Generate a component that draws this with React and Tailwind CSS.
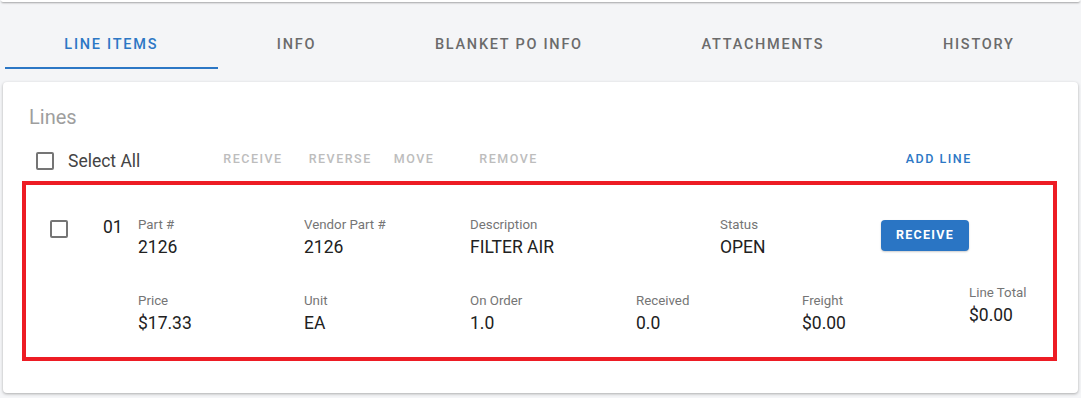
import React from 'react';

const tabs = ['LINE ITEMS', 'INFO', 'BLANKET PO INFO', 'ATTACHMENTS', 'HISTORY'];

function Box({ className = '' }) {
  return <div className={`w-[18px] h-[18px] border-2 border-[#757575] rounded-[2px] ${className}`} />;
}

function Field({ label, value, className = '' }) {
  return (
    <div className={className}>
      <div className="text-[13.3px] leading-4 text-[#757575]">{label}</div>
      <div className="mt-[3px] text-[17.5px] leading-[22px] text-[#212121]">{value}</div>
    </div>
  );
}

export default function App() {
  return (
    <div className="w-[1081px] h-[398px] overflow-hidden bg-[#f4f5f7] font-['Roboto',sans-serif]">
      <div className="h-[2px] mx-[1px] bg-white shadow-[0_1px_2px_rgba(0,0,0,0.35)] rounded-b" />

      <div className="flex mt-[17px] pl-[5px] pr-[7px]">
        {tabs.map((t, i) => (
          <div
            key={t}
            className={`flex-auto h-[50px] pt-[3px] flex items-center justify-center text-[14.5px] font-medium tracking-[0.12em] ${
              i === 0 ? 'text-[#2c77c5] border-b-2 border-[#2c77c5]' : 'text-[#6b6b6b] border-b-2 border-transparent'
            }`}
          >
            <span>{t}</span>
          </div>
        ))}
      </div>

      <div className="mt-[13px] mx-[3px] h-[311px] bg-white rounded-[4px] shadow-[0_1px_3px_rgba(0,0,0,0.3)] pt-[21px]">
        <div className="pl-[26px] text-[20px] leading-7 text-[#9e9e9e]">Lines</div>

        <div className="flex items-center h-[28px] mt-[16px] pl-[33px]">
          <Box className="border-[#6f6f6f]" />
          <span className="ml-[14px] text-[17.5px] text-[#444]">Select All</span>
          <div className="flex items-center text-[12.5px] font-medium tracking-[0.12em] text-[#bdbdbd] ml-[83px] -mt-[3px]">
            <span>RECEIVE</span>
            <span className="ml-[26px]">REVERSE</span>
            <span className="ml-[22px]">MOVE</span>
            <span className="ml-[45px]">REMOVE</span>
          </div>
          <span className="ml-[368px] -mt-[3px] text-[12.5px] font-medium tracking-[0.12em] text-[#2c77c5]">ADD LINE</span>
        </div>

        <div className="mt-[6px] ml-[19px] w-[1035px] h-[180px] border-4 border-[#ed1c24] pt-[32px]">
          <div className="flex items-start">
            <div className="w-[112px] flex items-start pl-[24px]">
              <Box className="mt-[3px]" />
              <span className="ml-[35px] -mt-[1px] text-[17.5px] leading-[22px] text-[#212121]">01</span>
            </div>
            <Field label="Part #" value="2126" className="w-[166px]" />
            <Field label="Vendor Part #" value="2126" className="w-[166px]" />
            <Field label="Description" value="FILTER AIR" className="w-[250px]" />
            <Field label="Status" value="OPEN" className="w-[161px]" />
            <button className="mt-[3px] w-[88px] h-[31px] rounded-[4px] bg-[#2a75c4] text-white text-[12.5px] font-bold tracking-[0.1em] shadow-[0_1px_2px_rgba(0,0,0,0.2)]">
              RECEIVE
            </button>
          </div>

          <div className="flex items-start mt-[35px] pl-[112px]">
            <Field label="Price" value="$17.33" className="w-[166px]" />
            <Field label="Unit" value="EA" className="w-[166px]" />
            <Field label="On Order" value="1.0" className="w-[166px]" />
            <Field label="Received" value="0.0" className="w-[166px]" />
            <Field label="Freight" value="$0.00" className="w-[167px]" />
            <Field label="Line Total" value="$0.00" className="-mt-[8px]" />
          </div>
        </div>
      </div>
    </div>
  );
}
